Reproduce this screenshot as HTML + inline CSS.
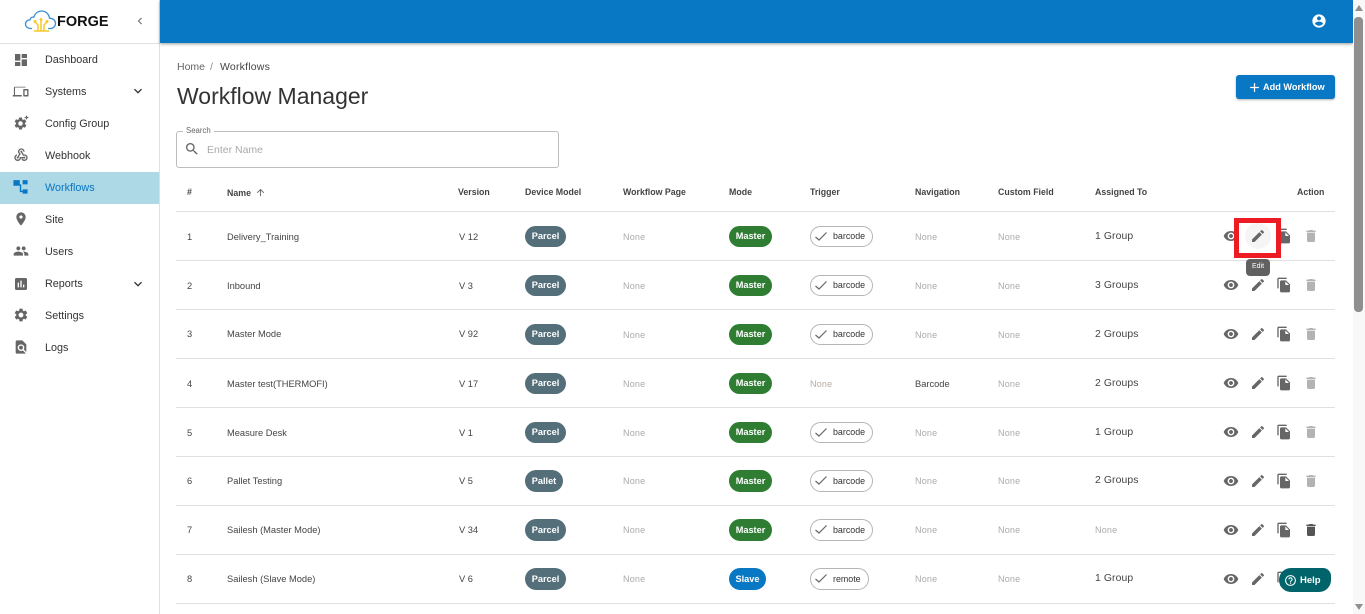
<!DOCTYPE html>
<html lang="en"><head><meta charset="utf-8"><title>Workflow Manager</title>
<style>
*{box-sizing:border-box}
html,body{margin:0;padding:0;width:1365px;height:614px;overflow:hidden;background:#fff;font-family:"Liberation Sans",sans-serif;color:#333}
.a{position:absolute;white-space:nowrap}
svg{display:block;fill:currentColor}
.side{position:absolute;left:0;top:0;width:160px;height:614px;background:#fff;border-right:1px solid #e0e0e0}
.mi{position:absolute;left:45px;font-size:10.8px;line-height:14px;color:#333}
.ic{position:absolute;color:#666}
.row{position:absolute;left:176px;width:1159px;height:49px;border-bottom:1px solid #e0e0e0}
.row>span,.row>svg{position:absolute}
.t{font-size:9.3px;line-height:12px;top:19px;color:#444;white-space:nowrap}
.n{font-size:9px;line-height:12px;top:19px;color:#aaa;white-space:nowrap;letter-spacing:.2px}
.g{font-size:10.4px;line-height:12px;top:19px;color:#444;white-space:nowrap;letter-spacing:.1px}
.c{top:14px;height:21px;border-radius:11px;color:#fff;font-size:9.2px;font-weight:bold;line-height:20px;text-align:center}
.p{left:349px;width:41px;background:#546e7a}
.m{left:553px;width:43px;background:#2e7d32}
.o{left:634px;top:14px;width:63px;height:21px;border:1px solid #b5b5b5;border-radius:11px;font-size:8.9px;line-height:19px;color:#333;padding-left:22px;white-space:nowrap}
.o svg{position:absolute;left:4px;top:5px;fill:none;stroke:#666;stroke-width:1.2}
.u .t,.u .n{top:18px}
.u .g{top:18px}
.u .c,.u .o{top:13px;height:22px}
.u .c{line-height:22px}
.u .o{line-height:20px}
.h{position:absolute;top:186px;font-size:8.8px;font-weight:bold;line-height:12px;color:#444;white-space:nowrap}
.e{left:1047px;top:16px;color:#666}.d{left:1074px;top:16px;color:#666}.f{left:1100px;top:16px;color:#666}.x{left:1127px;top:16px;color:#b3b3b3}
</style></head><body>
<svg width="0" height="0" style="position:absolute"><defs>
<symbol id="eye" viewBox="0 0 24 24"><path d="M12 4.5C7 4.5 2.73 7.61 1 12c1.73 4.39 6 7.5 11 7.5s9.27-3.11 11-7.5c-1.73-4.39-6-7.5-11-7.5zM12 17c-2.76 0-5-2.24-5-5s2.24-5 5-5 5 2.24 5 5-2.24 5-5 5zm0-8c-1.66 0-3 1.34-3 3s1.34 3 3 3 3-1.34 3-3-1.34-3-3-3z"/></symbol>
<symbol id="edit" viewBox="0 0 24 24"><path d="M3 17.25V21h3.75L17.81 9.94l-3.75-3.75L3 17.25zM20.71 7.04c.39-.39.39-1.02 0-1.41l-2.34-2.34c-.39-.39-1.02-.39-1.41 0l-1.83 1.83 3.75 3.75 1.83-1.83z"/></symbol>
<symbol id="copy" viewBox="0 0 24 24"><path d="M16 1H4c-1.1 0-2 .9-2 2v14h2V3h12V1zm-1 4l6 6v10c0 1.1-.9 2-2 2H7.99C6.89 23 6 22.1 6 21l.01-14c0-1.1.89-2 1.99-2h7zm-1 7h5.5L14 6.5V12z"/></symbol>
<symbol id="del" viewBox="0 0 24 24"><path d="M6 19c0 1.1.9 2 2 2h8c1.1 0 2-.9 2-2V7H6v12zM19 4h-3.5l-1-1h-5l-1 1H5v2h14V4z"/></symbol>
<symbol id="chk" viewBox="0 0 12 9"><path d="M.5 5L4 8L11.500 .5"/></symbol>
<symbol id="gear" viewBox="0 0 24 24"><path d="M19.14 12.94c.04-.3.06-.61.06-.94 0-.32-.02-.64-.07-.94l2.03-1.58c.18-.14.23-.41.12-.61l-1.92-3.32c-.12-.22-.37-.29-.59-.22l-2.39.96c-.5-.38-1.03-.7-1.62-.94l-.36-2.54c-.04-.24-.24-.41-.48-.41h-3.84c-.24 0-.43.17-.47.41l-.36 2.54c-.59.24-1.13.57-1.62.94l-2.39-.96c-.22-.08-.47 0-.59.22L2.74 8.87c-.12.21-.08.47.12.61l2.03 1.58c-.05.3-.09.63-.09.94s.02.64.07.94l-2.03 1.58c-.18.14-.23.41-.12.61l1.92 3.32c.12.22.37.29.59.22l2.39-.96c.5.38 1.03.7 1.62.94l.36 2.54c.05.24.24.41.48.41h3.84c.24 0 .44-.17.47-.41l.36-2.54c.59-.24 1.13-.56 1.62-.94l2.39.96c.22.08.47 0 .59-.22l1.92-3.32c.12-.22.07-.47-.12-.61l-2.01-1.58zM12 15.6c-1.98 0-3.6-1.62-3.6-3.6s1.62-3.6 3.6-3.6 3.6 1.62 3.6 3.6-1.62 3.6-3.6 3.6z"/></symbol>
<symbol id="chev" viewBox="0 0 24 24"><path d="M16.59 8.59L12 13.17 7.41 8.59 6 10l6 6 6-6z"/></symbol>
</defs></svg>

<div class="side">
<svg class="a" style="left:24px;top:9px" width="34" height="24" viewBox="0 0 34 24"><path d="M8 19.5H6.5C3.5 19.500 1.500 17.500 1.500 15S3.500 10.800 6 10.800C6.300 9 7.800 7.800 9.800 8.200C11 4.300 14 2 17.500 2c4.500 0 7.500 3.200 8 7.200C29 9.200 31.500 11.500 31.500 14.500s-2.500 5-5 5H24" fill="none" stroke="#3d8fd6" stroke-width="1.3"/><g fill="none" stroke="#f7c92c" stroke-width="1.500"><path d="M14 22v-6l-3-3M17 22V11M20 22v-6l3-3M10 22h15"/></g><circle cx="11" cy="12.500" r="1.500" fill="#f7c92c"/><circle cx="17" cy="10.500" r="1.500" fill="#f7c92c"/><circle cx="23" cy="12.500" r="1.500" fill="#f7c92c"/></svg>
<span class="a" style="left:57px;top:13px;font-size:14.500px;font-weight:bold;line-height:18px;color:#111">FORGE</span>
<svg class="a" style="left:133px;top:14px;color:#777" width="14" height="14" viewBox="0 0 24 24"><path d="M15.410 7.410L14 6l-6 6 6 6 1.410-1.410L10.830 12z"/></svg>
<div class="a" style="left:0;top:43px;width:159px;height:1px;background:#e0e0e0"></div>
<div class="a" style="left:0;top:172px;width:159px;height:32px;background:#add8e6"></div>

<svg class="ic" style="left:13px;top:52px" width="16" height="16" viewBox="0 0 24 24"><path d="M3 13h8V3H3v10zm0 8h8v-6H3v6zm10 0h8V11h-8v10zm0-18v6h8V3h-8z"/></svg>
<span class="mi" style="top:53px">Dashboard</span>
<svg class="ic" style="left:12px;top:83px" width="18" height="18" viewBox="0 0 24 24"><path d="M4 6h14V5H4c-.8 0-1.500.7-1.500 1.500V16H1v2h12v-2H4V6zm17 2h-5c-.6 0-1 .4-1 1v8c0 .6.4 1 1 1h5c.6 0 1-.4 1-1V9c0-.6-.4-1-1-1zm-.8 8h-3.400v-6h3.400v6z"/></svg>
<span class="mi" style="top:85px">Systems</span>
<svg class="a" style="left:130px;top:83px;color:#333" width="16" height="16"><use href="#chev"/></svg>
<svg class="ic" style="left:13px;top:116px" width="15" height="15"><use href="#gear"/></svg>
<svg class="a" style="left:24px;top:115px;color:#666" width="5" height="7" viewBox="0 0 5 7"><path d="M2.500 0l.7 1.800L5 2.500l-1.800.7L2.500 5l-.7-1.800L0 2.500l1.800-.7z"/></svg>
<span class="mi" style="top:117px">Config Group</span>
<svg class="ic" style="left:13px;top:147px" width="16" height="16" viewBox="0 0 24 24"><path d="M10 15h5.880c.27-.31.67-.5 1.120-.5.830 0 1.500.67 1.500 1.500s-.67 1.500-1.500 1.500c-.44 0-.84-.19-1.120-.5H11.900c-.46 2.280-2.480 4-4.900 4-2.760 0-5-2.240-5-5 0-2.420 1.720-4.440 4-4.900v2.070c-1.160.41-2 1.530-2 2.830 0 1.650 1.350 3 3 3s3-1.350 3-3v-2zm2.500-11c1.650 0 3 1.350 3 3h2c0-2.760-2.240-5-5-5s-5 2.240-5 5c0 1.430.6 2.710 1.550 3.620l-2.350 3.900c-.68.14-1.200.75-1.200 1.480 0 .83.67 1.500 1.500 1.500s1.500-.67 1.500-1.500c0-.16-.02-.31-.07-.45l3.380-5.630C10.490 9.610 9.500 8.420 9.500 7c0-1.650 1.350-3 3-3zm4.500 9c-.64 0-1.230.2-1.720.54l-3.050-5.070C11.530 8.350 11 7.740 11 7c0-.83.67-1.500 1.500-1.500S14 6.170 14 7c0 .15-.02.29-.06.43l2.190 3.650c.28-.05.57-.08.87-.08 2.760 0 5 2.240 5 5s-2.240 5-5 5c-1.850 0-3.470-1.010-4.330-2.500l1.670-1.250C14.900 18.100 15.900 19 17 19c1.650 0 3-1.350 3-3s-1.350-3-3-3z"/></svg>
<span class="mi" style="top:149px">Webhook</span>
<svg class="a" style="left:12px;top:178px;color:#0877c4" width="17" height="17" viewBox="0 0 24 24"><path d="M2 3h9v8H2zM15 3h7v6h-7zM13 9v9h2v-2h7v6h-7v-2h-4V9z"/></svg>
<span class="mi" style="top:181px;color:#0877c4">Workflows</span>
<svg class="ic" style="left:13px;top:211px" width="16" height="16" viewBox="0 0 24 24"><path d="M12 2C8.130 2 5 5.130 5 9c0 5.250 7 13 7 13s7-7.750 7-13c0-3.870-3.130-7-7-7zm0 9.500c-1.380 0-2.500-1.120-2.500-2.500s1.120-2.500 2.500-2.500 2.500 1.120 2.500 2.500-1.120 2.500-2.500 2.500z"/></svg>
<span class="mi" style="top:213px">Site</span>
<svg class="ic" style="left:13px;top:243px" width="16" height="16" viewBox="0 0 24 24"><path d="M16 11c1.660 0 2.990-1.340 2.990-3S17.660 5 16 5c-1.660 0-3 1.340-3 3s1.340 3 3 3zm-8 0c1.660 0 2.990-1.340 2.990-3S9.660 5 8 5C6.340 5 5 6.340 5 8s1.340 3 3 3zm0 2c-2.330 0-7 1.170-7 3.500V19h14v-2.500c0-2.330-4.670-3.500-7-3.500zm8 0c-.29 0-.62.02-.97.05 1.160.84 1.970 1.970 1.970 3.450V19h6v-2.500c0-2.330-4.670-3.500-7-3.500z"/></svg>
<span class="mi" style="top:245px">Users</span>
<svg class="ic" style="left:13px;top:276px" width="16" height="16" viewBox="0 0 24 24"><path d="M19 3H5c-1.100 0-2 .9-2 2v14c0 1.100.9 2 2 2h14c1.100 0 2-.9 2-2V5c0-1.100-.9-2-2-2zM9 17H7v-7h2v7zm4 0h-2V7h2v10zm4 0h-2v-4h2v4z"/></svg>
<span class="mi" style="top:277px">Reports</span>
<svg class="a" style="left:130px;top:276px;color:#333" width="16" height="16"><use href="#chev"/></svg>
<svg class="ic" style="left:13px;top:307px" width="16" height="16"><use href="#gear"/></svg>
<span class="mi" style="top:309px">Settings</span>
<svg class="ic" style="left:13px;top:339px" width="16" height="16" viewBox="0 0 24 24"><path d="M20 19.590V8l-6-6H6c-1.100 0-1.990.9-1.990 2L4 20c0 1.100.89 2 1.990 2H18c.45 0 .85-.15 1.190-.4l-4.430-4.430c-.8.520-1.740.83-2.760.83-2.760 0-5-2.240-5-5s2.240-5 5-5 5 2.240 5 5c0 1.020-.31 1.960-.83 2.750L20 19.590zM9 13c0 1.660 1.340 3 3 3s3-1.340 3-3-1.340-3-3-3-3 1.340-3 3z"/></svg>
<span class="mi" style="top:341px">Logs</span>
</div>

<div class="a" style="left:160px;top:0;width:1193px;height:43px;background:#0877c4;box-shadow:0 1px 3px rgba(0,0,0,.4)"></div>
<svg class="a" style="left:1311px;top:13px;color:#fff" width="16" height="16" viewBox="0 0 24 24"><path d="M12 2C6.480 2 2 6.480 2 12s4.480 10 10 10 10-4.480 10-10S17.520 2 12 2zm0 3c1.660 0 3 1.340 3 3s-1.340 3-3 3-3-1.340-3-3 1.340-3 3-3zm0 14.200c-2.500 0-4.710-1.280-6-3.220.03-1.990 4-3.080 6-3.080 1.990 0 5.970 1.090 6 3.080-1.290 1.940-3.500 3.220-6 3.220z"/></svg>

<span class="a" style="left:177px;top:60px;font-size:10.500px;line-height:14px;color:#666">Home</span>
<span class="a" style="left:210px;top:60px;font-size:10.500px;line-height:14px;color:#888">/</span>
<span class="a" style="left:220px;top:60px;font-size:10.500px;line-height:14px;color:#444;letter-spacing:.2px">Workflows</span>
<span class="a" style="left:177px;top:81px;font-size:23px;line-height:30px;color:#333">Workflow Manager</span>

<div class="a" style="left:1236px;top:75px;width:99px;height:24px;background:#0877c4;border-radius:3px;box-shadow:0 1px 2px rgba(0,0,0,.3);color:#fff;font-size:9.200px;font-weight:bold;line-height:24px;padding-left:27px">Add Workflow</div>
<svg class="a" style="left:1247px;top:80px;color:#fff" width="15" height="15" viewBox="0 0 24 24"><path d="M19 13h-6v6h-2v-6H5v-2h6V5h2v6h6v2z"/></svg>

<div class="a" style="left:176px;top:131px;width:383px;height:37px;border:1px solid #bdbdbd;border-radius:3px"></div>
<span class="a" style="left:183px;top:126px;background:#fff;padding:0 3px;font-size:7.800px;line-height:10px;color:#666">Search</span>
<svg class="a" style="left:184px;top:141px;color:#666" width="16" height="16" viewBox="0 0 24 24"><path d="M15.500 14h-.79l-.28-.27C15.410 12.590 16 11.110 16 9.500 16 5.910 13.090 3 9.500 3S3 5.910 3 9.500 5.910 16 9.500 16c1.610 0 3.090-.59 4.230-1.570l.27.28v.79l5 4.990L20.490 19l-4.990-5zm-6 0C7.010 14 5 11.990 5 9.500S7.010 5 9.500 5 14 7.010 14 9.500 11.990 14 9.500 14z"/></svg>
<span class="a" style="left:207px;top:144px;font-size:10.500px;line-height:13px;color:#aaa">Enter Name</span>

<span class="h" style="left:187px">#</span>
<span class="h" style="left:227px;top:187px">Name</span>
<svg class="a" style="left:255px;top:187px;color:#666" width="11" height="11" viewBox="0 0 24 24"><path d="M4 12l1.410 1.410L11 7.830V20h2V7.830l5.580 5.590L20 12l-8-8-8 8z"/></svg>
<span class="h" style="left:458px">Version</span>
<span class="h" style="left:525px">Device Model</span>
<span class="h" style="left:623px">Workflow Page</span>
<span class="h" style="left:729px">Mode</span>
<span class="h" style="left:810px">Trigger</span>
<span class="h" style="left:915px">Navigation</span>
<span class="h" style="left:998px">Custom Field</span>
<span class="h" style="left:1095px">Assigned To</span>
<span class="h" style="left:1297px">Action</span>
<div class="a" style="left:176px;top:211px;width:1159px;height:1px;background:#e0e0e0"></div>

<div class="row" style="top:212px"><span class="t" style="left:11px">1</span><span class="t" style="left:51px">Delivery_Training</span><span class="t" style="left:283px">V 12</span><span class="c p">Parcel</span><span class="n" style="left:447px">None</span><span class="c m">Master</span><span class="o"><svg width="12" height="9"><use href="#chk"/></svg>barcode</span><span class="n" style="left:739px">None</span><span class="n" style="left:822px">None</span><span class="g" style="left:919px">1 Group</span><svg class="e" width="16" height="16"><use href="#eye"/></svg><svg class="d" width="16" height="16"><use href="#edit"/></svg><svg class="f" width="16" height="16"><use href="#copy"/></svg><svg class="x" width="16" height="16"><use href="#del"/></svg></div>
<div class="row" style="top:261px"><span class="t" style="left:11px">2</span><span class="t" style="left:51px">Inbound</span><span class="t" style="left:283px">V 3</span><span class="c p">Parcel</span><span class="n" style="left:447px">None</span><span class="c m">Master</span><span class="o"><svg width="12" height="9"><use href="#chk"/></svg>barcode</span><span class="n" style="left:739px">None</span><span class="n" style="left:822px">None</span><span class="g" style="left:919px">3 Groups</span><svg class="e" width="16" height="16"><use href="#eye"/></svg><svg class="d" width="16" height="16"><use href="#edit"/></svg><svg class="f" width="16" height="16"><use href="#copy"/></svg><svg class="x" width="16" height="16"><use href="#del"/></svg></div>
<div class="row" style="top:310px"><span class="t" style="left:11px;top:18px">3</span><span class="t" style="left:51px;top:18px">Master Mode</span><span class="t" style="left:283px;top:18px">V 92</span><span class="c p">Parcel</span><span class="n" style="left:447px">None</span><span class="c m">Master</span><span class="o"><svg width="12" height="9"><use href="#chk"/></svg>barcode</span><span class="n" style="left:739px">None</span><span class="n" style="left:822px">None</span><span class="g" style="left:919px">2 Groups</span><svg class="e" width="16" height="16"><use href="#eye"/></svg><svg class="d" width="16" height="16"><use href="#edit"/></svg><svg class="f" width="16" height="16"><use href="#copy"/></svg><svg class="x" width="16" height="16"><use href="#del"/></svg></div>
<div class="row" style="top:359px"><span class="t" style="left:11px">4</span><span class="t" style="left:51px">Master test(THERMOFI)</span><span class="t" style="left:283px">V 17</span><span class="c p">Parcel</span><span class="n" style="left:447px">None</span><span class="c m">Master</span><span class="n" style="left:634px;color:#bbaa9e">None</span><span class="t" style="left:739px">Barcode</span><span class="n" style="left:822px">None</span><span class="g" style="left:919px">2 Groups</span><svg class="e" width="16" height="16"><use href="#eye"/></svg><svg class="d" width="16" height="16"><use href="#edit"/></svg><svg class="f" width="16" height="16"><use href="#copy"/></svg><svg class="x" width="16" height="16"><use href="#del"/></svg></div>
<div class="row" style="top:408px"><span class="t" style="left:11px">5</span><span class="t" style="left:51px">Measure Desk</span><span class="t" style="left:283px">V 1</span><span class="c p">Parcel</span><span class="n" style="left:447px">None</span><span class="c m">Master</span><span class="o"><svg width="12" height="9"><use href="#chk"/></svg>barcode</span><span class="n" style="left:739px">None</span><span class="n" style="left:822px">None</span><span class="g" style="left:919px">1 Group</span><svg class="e" width="16" height="16"><use href="#eye"/></svg><svg class="d" width="16" height="16"><use href="#edit"/></svg><svg class="f" width="16" height="16"><use href="#copy"/></svg><svg class="x" width="16" height="16"><use href="#del"/></svg></div>
<div class="row u" style="top:457px"><span class="t" style="left:11px">6</span><span class="t" style="left:51px">Pallet Testing</span><span class="t" style="left:283px">V 5</span><span class="c p" style="width:38px">Pallet</span><span class="n" style="left:447px">None</span><span class="c m">Master</span><span class="o"><svg width="12" height="9"><use href="#chk"/></svg>barcode</span><span class="n" style="left:739px">None</span><span class="n" style="left:822px">None</span><span class="g" style="left:919px">2 Groups</span><svg class="e" width="16" height="16"><use href="#eye"/></svg><svg class="d" width="16" height="16"><use href="#edit"/></svg><svg class="f" width="16" height="16"><use href="#copy"/></svg><svg class="x" width="16" height="16"><use href="#del"/></svg></div>
<div class="row u" style="top:506px"><span class="t" style="left:11px">7</span><span class="t" style="left:51px">Sailesh (Master Mode)</span><span class="t" style="left:283px">V 34</span><span class="c p">Parcel</span><span class="n" style="left:447px">None</span><span class="c m">Master</span><span class="o"><svg width="12" height="9"><use href="#chk"/></svg>barcode</span><span class="n" style="left:739px">None</span><span class="n" style="left:822px">None</span><span class="n" style="left:919px">None</span><svg class="e" width="16" height="16"><use href="#eye"/></svg><svg class="d" width="16" height="16"><use href="#edit"/></svg><svg class="f" width="16" height="16"><use href="#copy"/></svg><svg class="x" style="color:#555" width="16" height="16"><use href="#del"/></svg></div>
<div class="row u" style="top:555px"><span class="t" style="left:11px">8</span><span class="t" style="left:51px">Sailesh (Slave Mode)</span><span class="t" style="left:283px">V 6</span><span class="c p">Parcel</span><span class="n" style="left:447px">None</span><span class="c m" style="width:37px;background:#0877c4">Slave</span><span class="o" style="width:59px"><svg width="12" height="9"><use href="#chk"/></svg>remote</span><span class="n" style="left:739px">None</span><span class="n" style="left:822px">None</span><span class="g" style="left:919px">1 Group</span><svg class="e" width="16" height="16"><use href="#eye"/></svg><svg class="d" width="16" height="16"><use href="#edit"/></svg><svg class="f" width="16" height="16"><use href="#copy"/></svg></div>

<div class="a" style="left:1245px;top:223px;width:26px;height:26px;border-radius:50%;background:#f5f5f5"></div>
<svg class="a" style="left:1250px;top:228px;color:#666" width="16" height="16"><use href="#edit"/></svg>
<div class="a" style="left:1234px;top:218px;width:47px;height:40px;border:5px solid #ed1c24"></div>
<div class="a" style="left:1246px;top:259px;width:24px;height:17px;background:#616161;border-radius:4px;color:#fff;font-size:7px;line-height:16px;text-align:center">Edit</div>

<div class="a" style="left:1279px;top:568px;width:52px;height:24px;background:#00646a;border-radius:12px 8px 12px 12px;color:#fff;font-size:9.500px;font-weight:bold;line-height:26px;padding-left:21px">Help</div>
<svg class="a" style="left:1284px;top:574px;color:#fff" width="13" height="13" viewBox="0 0 24 24"><path d="M11 18h2v-2h-2v2zm1-16C6.480 2 2 6.480 2 12s4.480 10 10 10 10-4.480 10-10S17.520 2 12 2zm0 18c-4.410 0-8-3.590-8-8s3.590-8 8-8 8 3.590 8 8-3.590 8-8 8zm0-14c-2.210 0-4 1.790-4 4h2c0-1.100.9-2 2-2s2 .9 2 2c0 2-3 1.750-3 5h2c0-2.250 3-2.500 3-5 0-2.210-1.790-4-4-4z"/></svg>

<div class="a" style="left:1353px;top:0;width:12px;height:614px;background:#f8f8f8"></div>
<div class="a" style="left:1354px;top:17px;width:9px;height:295px;background:#8f8f8f;border-radius:4px"></div>
<svg class="a" style="left:1354px;top:5px;color:#8f8f8f" width="10" height="7"><path d="M5 0l4 6H1z"/></svg>
<svg class="a" style="left:1354px;top:604px;color:#8f8f8f" width="10" height="7"><path d="M1 0h8L5 6z"/></svg>
</body></html>
